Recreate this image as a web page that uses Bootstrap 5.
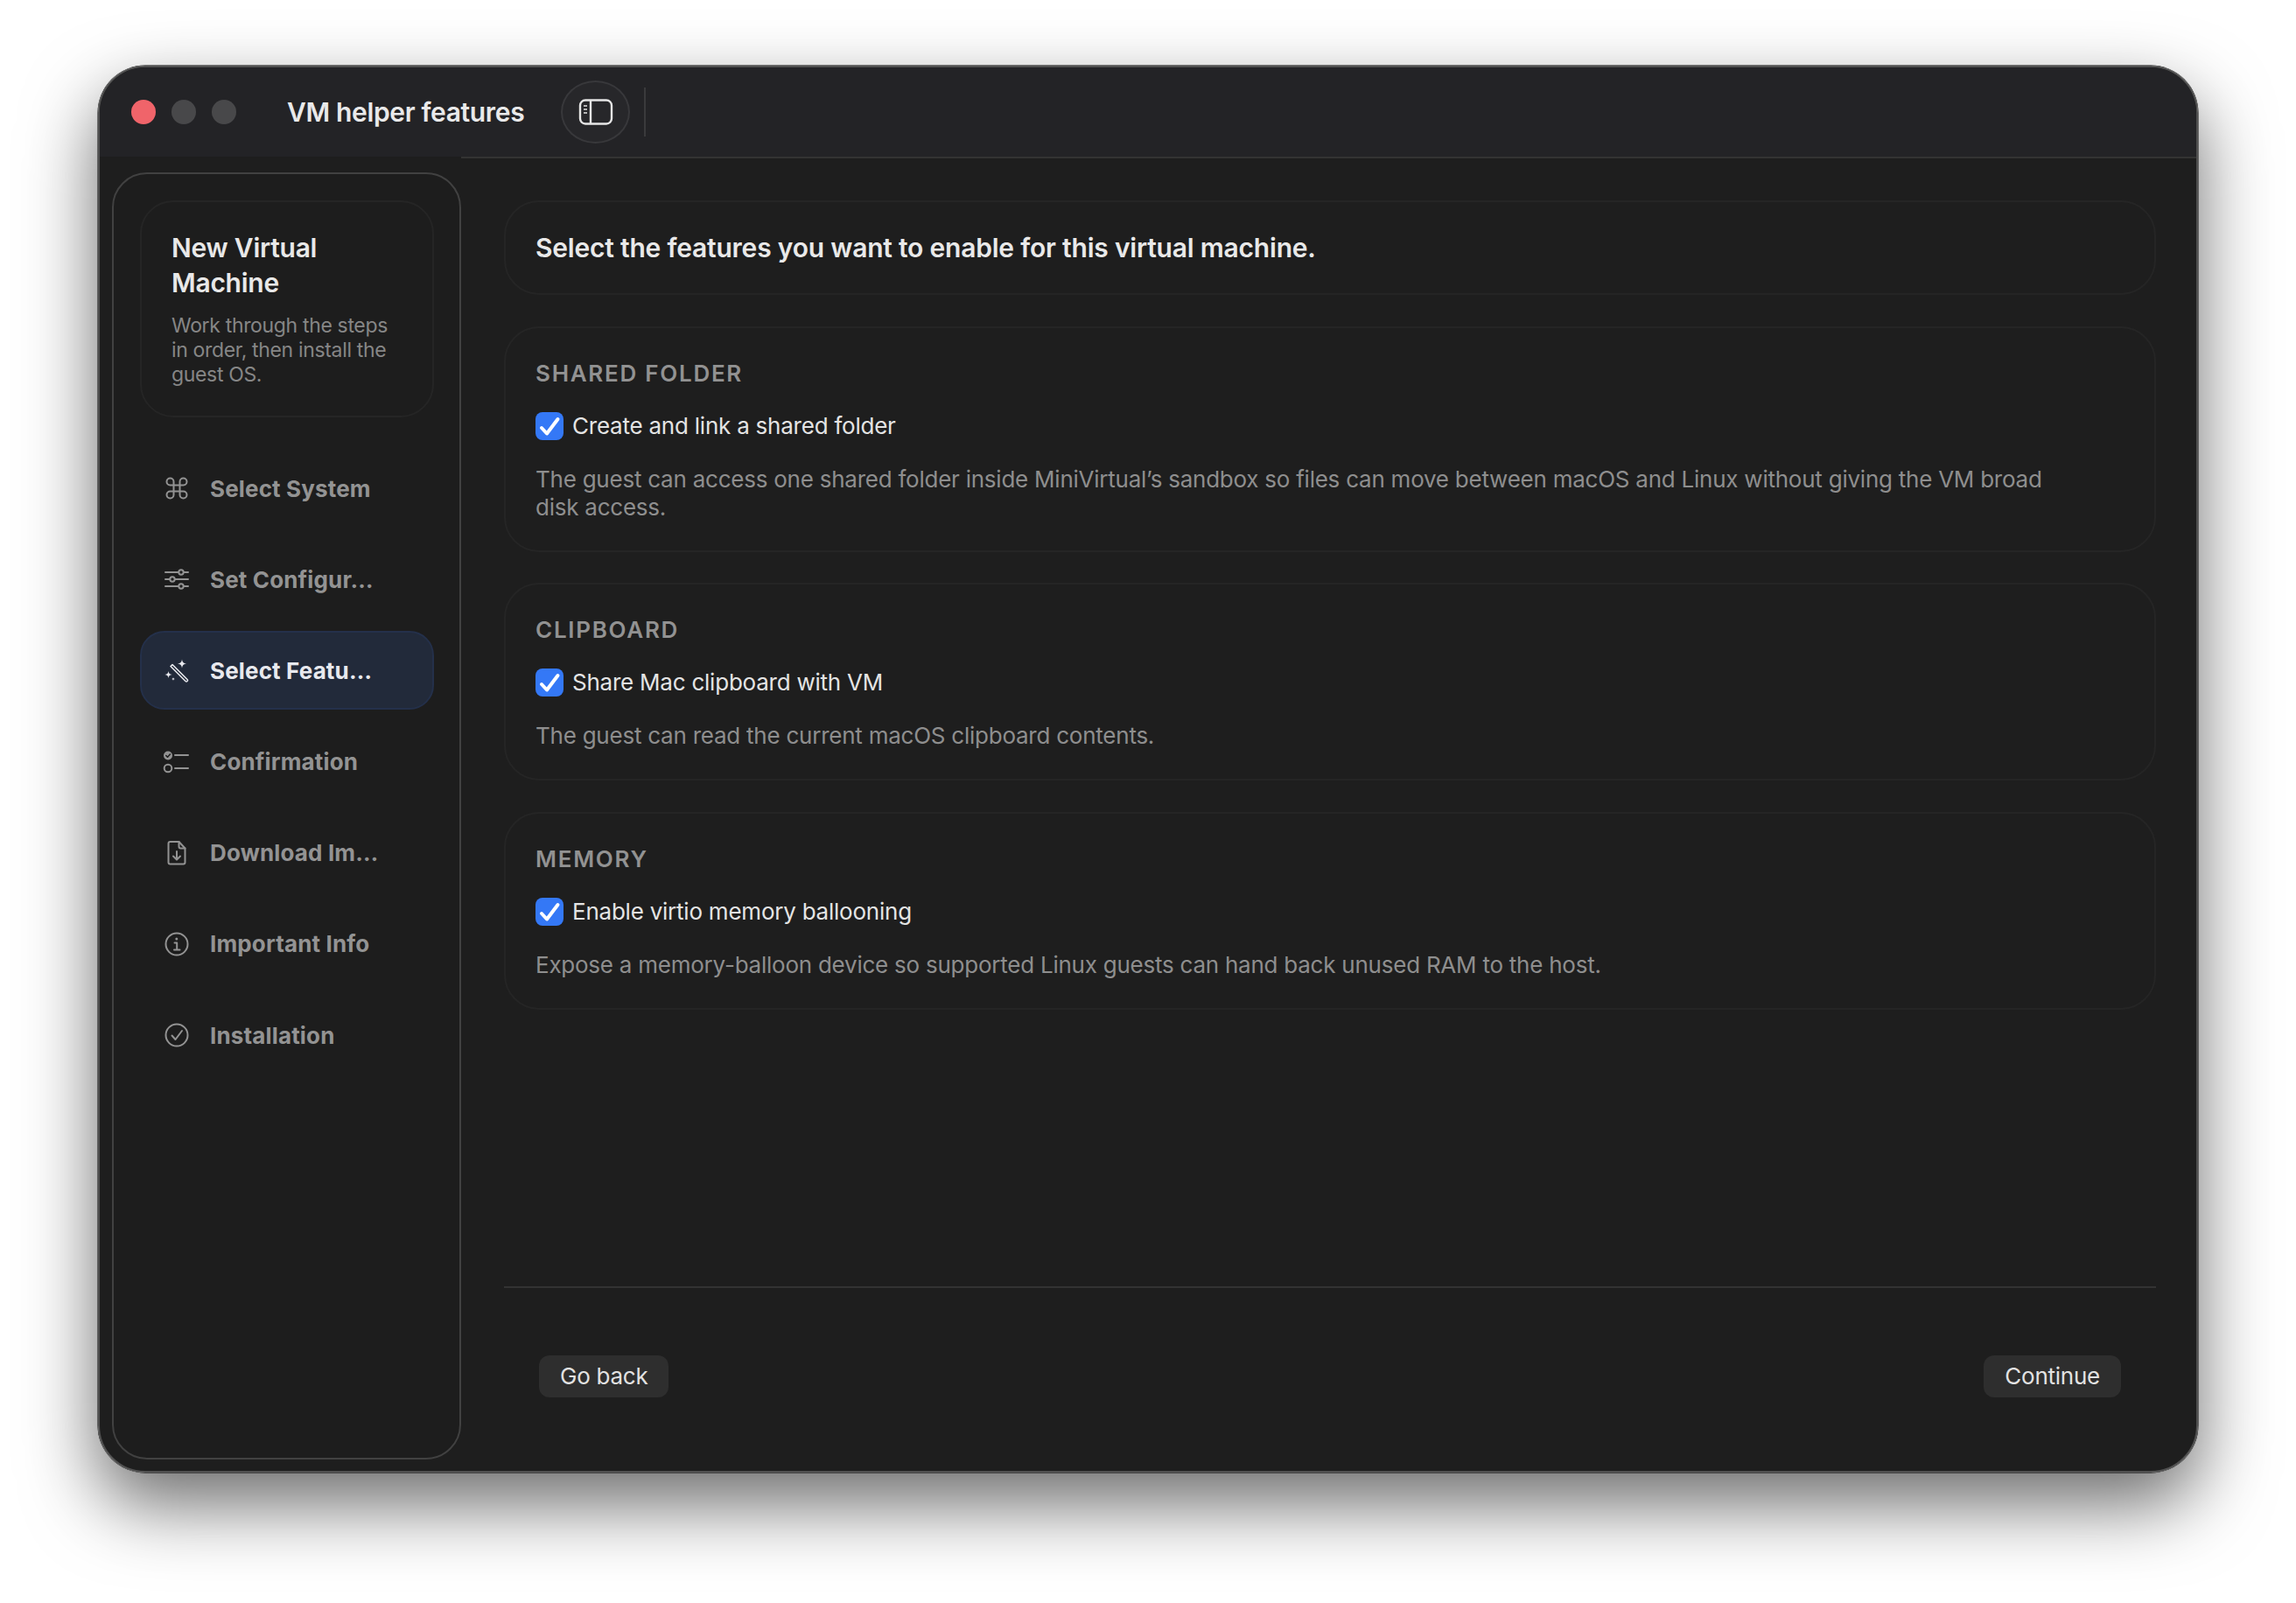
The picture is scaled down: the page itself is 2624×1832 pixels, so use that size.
<!DOCTYPE html>
<html lang="en">
<head>
<meta charset="utf-8">
<title>VM helper features</title>
<link href="https://cdn.jsdelivr.net/npm/bootstrap@5.3.0/dist/css/bootstrap.min.css" rel="stylesheet">
<style>
html,body{height:100%;}
body{background:#fff;font-family:Inter,"Liberation Sans",sans-serif;padding:75px 112px 0;overflow:hidden;}
.vm-window{width:2400px;height:1608px;background:#1e1e1e;border:2px solid #505050;border-radius:54px;overflow:hidden;}
.vm-frame{border-radius:54px;box-shadow:0 0 0 .5px #0c0c0c,0 36px 84px rgba(0,0,0,.58);}
.vm-titlebar{height:102px;flex:none;background:#232326;padding-left:36px;}
.vm-light{width:28px;height:28px;border-radius:50%;background:#48484a;margin-right:18px;}
.vm-light-red{background:#f0646a;}
.vm-title{font-size:30px;font-weight:600;color:#e9e9ea;margin-left:40px;letter-spacing:-.35px;}
.vm-toggle{width:79px;height:72px;border-radius:50%;background:#27272a;border:2px solid #38383b;margin-left:42px;}
.vm-vsep{width:2px;height:56px;background:#3a3a3c;margin-left:16px;}
.vm-body{flex:1 1 auto;min-height:0;}
.vm-sidebar{width:399px;flex:none;margin:18px 0 13px 14px;border:2px solid #414141;border-radius:40px;padding:30px 29px 30px 30px;background:#1d1d1d;}
.vm-headcard{height:248px;border:2px solid #252525;border-radius:38px;padding:32px 34px;margin-bottom:36px;}
.vm-headcard-title{font-size:30px;font-weight:600;line-height:40px;color:#e8e8e8;margin:0 0 15px;letter-spacing:-.25px;}
.vm-headcard-sub{font-size:23px;line-height:28px;color:#868686;margin:0;letter-spacing:-.34px;}
.vm-step{height:90px;margin-bottom:14.2px;padding-left:24px;gap:22px;border:2px solid transparent;border-radius:28px;color:#939393;font-size:26px;font-weight:700;letter-spacing:.15px;white-space:nowrap;}
.vm-step svg{width:32px;height:32px;flex:none;fill:none;stroke:currentColor;stroke-width:2;stroke-linecap:round;stroke-linejoin:round;}
.vm-step-on{background:#222a3a;border-color:#24304a;color:#e8e9ee;}
.vm-wand{stroke-width:1.5 !important;}
.vm-main{flex:1 1 auto;min-width:0;border-top:2px solid #333;padding:48px 46px 0 49px;margin-left:0;}
.vm-cards{gap:35.5px;}
.vm-card{border:2px solid #252525;border-radius:40px;padding:33px 34px;}
.vm-card-sec{padding-top:36px;}
.vm-lead{font-size:30px;font-weight:600;line-height:38px;color:#e9e9e9;margin:0;letter-spacing:-.21px;}
.vm-heading{font-size:26px;font-weight:600;line-height:32px;color:#929292;letter-spacing:1.72px;text-transform:uppercase;margin:0 0 28px;}
.vm-check{margin:0 0 29px;padding:0;min-height:32px;gap:10px;}
.vm-check .form-check-input{width:32px;height:32px;margin:0;float:none;border:0;border-radius:8px;background-color:#3478f6;background-size:100%;flex:none;}
.vm-check .form-check-input:checked[type=checkbox]{background-image:url("data:image/svg+xml,%3csvg xmlns='http://www.w3.org/2000/svg' viewBox='0 0 32 32'%3e%3cpath fill='none' stroke='%23fff' stroke-width='4' stroke-linecap='round' stroke-linejoin='round' d='M7 18l6 6.500L25.500 8'/%3e%3c/svg%3e");}
.vm-check .form-check-label{font-size:26px;line-height:32px;color:#e4e4e4;letter-spacing:-.23px;opacity:1;}
.vm-desc{font-size:26px;line-height:32px;color:#8e8e8e;margin:0;letter-spacing:-.24px;max-width:1765px;}
.vm-footer{margin-top:auto;border-top:2px solid #333;padding:77px 40px 84px 40px;}
.vm-btn{height:48px;padding:0 24px;background:#2e2e2e;border:0;border-radius:12px;color:#e2e2e2;font-size:26px;line-height:48px;letter-spacing:-.25px;}
.vm-btn:hover{background:#2e2e2e;color:#e2e2e2;}
</style>
</head>
<body>
<div class="vm-frame">
<div class="vm-window d-flex flex-column">
  <div class="vm-titlebar d-flex align-items-center">
    <span class="vm-light vm-light-red"></span>
    <span class="vm-light"></span>
    <span class="vm-light"></span>
    <span class="vm-title">VM helper features</span>
    <span class="vm-toggle d-flex align-items-center justify-content-center">
      <svg width="40" height="32" viewBox="0 0 40 32" fill="none" stroke="#e6e6e6" stroke-width="2.4">
        <rect x="2" y="2.500" width="36" height="27" rx="6"/>
        <path d="M14 2.500v27"/>
        <path d="M6 9h4M6 13h4M6 17h4" stroke-width="2" stroke="#b5b5b5"/>
      </svg>
    </span>
    <span class="vm-vsep"></span>
  </div>
  <div class="vm-body d-flex">
    <aside class="vm-sidebar d-flex flex-column">
      <div class="vm-headcard">
        <h2 class="vm-headcard-title">New Virtual Machine</h2>
        <p class="vm-headcard-sub">Work through the steps in order, then install the guest OS.</p>
      </div>
      <div class="vm-step d-flex align-items-center">
        <svg viewBox="0 0 32 32"><path d="M12.500 12.500h7v7h-7zM12.500 12.500V8.500a4 4 0 1 0-4 4h4M19.500 12.500h4a4 4 0 1 0-4-4v4M19.500 19.500v4a4 4 0 1 0 4-4h-4M12.500 19.500h-4a4 4 0 1 0 4 4v-4"/></svg>
        <span>Select System</span>
      </div>
      <div class="vm-step d-flex align-items-center">
        <svg viewBox="0 0 32 32"><path d="M3 8h15M24 8h5M3 16h5M14 16h15M3 24h15M24 24h5"/><circle cx="21" cy="8" r="2.700"/><circle cx="11" cy="16" r="2.700"/><circle cx="21" cy="24" r="2.700"/></svg>
        <span>Set Configur…</span>
      </div>
      <div class="vm-step vm-step-on d-flex align-items-center">
        <svg class="vm-wand" viewBox="0 0 32 32"><path d="M9 11.500l2-2 17 17a1.400 1.400 0 0 1-2 2z"/><path d="M22 3.500c.4 3 1.600 4.400 5 5-3.400.6-4.600 2-5 5-.4-3-1.600-4.400-5-5 3.400-.6 4.600-2 5-5zM6.500 17c.3 2.300 1.200 3.400 4 4-2.800.6-3.700 1.700-4 4-.3-2.300-1.200-3.400-4-4 2.800-.6 3.700-1.700 4-4zM12 24c.2 1.200.6 1.800 2 2-1.400.2-1.800.8-2 2-.2-1.200-.6-1.800-2-2 1.400-.2 1.800-.8 2-2z" fill="currentColor" stroke="none"/></svg>
        <span>Select Featu…</span>
      </div>
      <div class="vm-step d-flex align-items-center">
        <svg viewBox="0 0 32 32"><circle cx="6" cy="8.500" r="5" fill="currentColor" stroke="none"/><path d="M3.800 8.500l1.700 1.800 2.900-3.300" stroke="#1e1e1e" stroke-width="1.500"/><circle cx="6" cy="23" r="4.300"/><path d="M14 8h15M14 23h15"/></svg>
        <span>Confirmation</span>
      </div>
      <div class="vm-step d-flex align-items-center">
        <svg viewBox="0 0 32 32"><path d="M8.500 3h10l7 7.500v16a2 2 0 0 1-2 2h-15a2 2 0 0 1-2-2v-21.500a2 2 0 0 1 2-2z"/><path d="M18.500 3v5.500a2 2 0 0 0 2 2h5M16 14v9M12 19.500l4 4 4-4"/></svg>
        <span>Download Im…</span>
      </div>
      <div class="vm-step d-flex align-items-center">
        <svg viewBox="0 0 32 32"><circle cx="16" cy="16" r="12.500"/><path d="M13.500 14.500H16.200V22M13 22.500h6.500"/><circle cx="15.800" cy="10" r="1.500" fill="currentColor" stroke="none"/></svg>
        <span>Important Info</span>
      </div>
      <div class="vm-step d-flex align-items-center">
        <svg viewBox="0 0 32 32"><circle cx="16" cy="16" r="12.500"/><path d="M10.500 16.500l4 4.500 7.500-10"/></svg>
        <span>Installation</span>
      </div>
    </aside>
    <main class="vm-main d-flex flex-column">
      <div class="vm-cards d-flex flex-column">
        <section class="vm-card"><p class="vm-lead">Select the features you want to enable for this virtual machine.</p></section>
        <section class="vm-card vm-card-sec">
          <h3 class="vm-heading">Shared Folder</h3>
          <div class="form-check vm-check d-flex align-items-center">
            <input class="form-check-input" type="checkbox" id="vm-c1" checked>
            <label class="form-check-label" for="vm-c1">Create and link a shared folder</label>
          </div>
          <p class="vm-desc">The guest can access one shared folder inside MiniVirtual’s sandbox so files can move between macOS and Linux without giving the VM broad disk access.</p>
        </section>
        <section class="vm-card vm-card-sec">
          <h3 class="vm-heading">Clipboard</h3>
          <div class="form-check vm-check d-flex align-items-center">
            <input class="form-check-input" type="checkbox" id="vm-c2" checked>
            <label class="form-check-label" for="vm-c2">Share Mac clipboard with VM</label>
          </div>
          <p class="vm-desc">The guest can read the current macOS clipboard contents.</p>
        </section>
        <section class="vm-card vm-card-sec">
          <h3 class="vm-heading">Memory</h3>
          <div class="form-check vm-check d-flex align-items-center">
            <input class="form-check-input" type="checkbox" id="vm-c3" checked>
            <label class="form-check-label" for="vm-c3">Enable virtio memory ballooning</label>
          </div>
          <p class="vm-desc">Expose a memory-balloon device so supported Linux guests can hand back unused RAM to the host.</p>
        </section>
      </div>
      <div class="vm-footer d-flex justify-content-between">
        <button type="button" class="btn vm-btn">Go back</button>
        <button type="button" class="btn vm-btn">Continue</button>
      </div>
    </main>
  </div>
</div>
</div>
<script src="https://cdn.jsdelivr.net/npm/bootstrap@5.3.0/dist/js/bootstrap.bundle.min.js"></script>
</body>
</html>
